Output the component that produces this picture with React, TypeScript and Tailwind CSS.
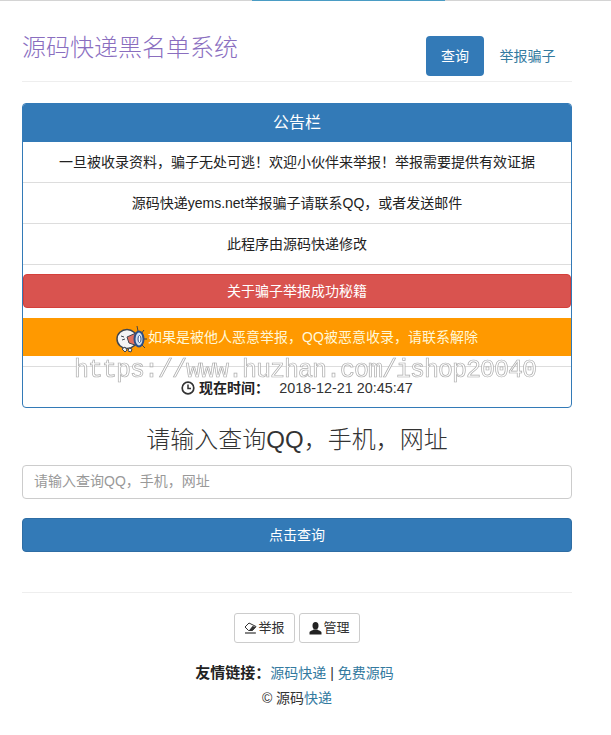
import React from "react";

const font = { fontFamily: '"Liberation Sans", "Noto Sans CJK SC", sans-serif' };

function Clock() {
  return (
    <svg width="14" height="14" viewBox="0 0 14 14" className="inline-block align-[-2px]">
      <circle cx="7" cy="7" r="5.8" fill="none" stroke="#333" strokeWidth="1.7" />
      <path d="M7 3.6V7.4H10" fill="none" stroke="#333" strokeWidth="1.5" />
    </svg>
  );
}

function Eraser() {
  return (
    <svg width="13" height="12" viewBox="0 0 13 12" className="inline-block align-[-1px]">
      <path d="M1 5 5 1 12 4.5 8.5 8.5H4.5Z" fill="#fff" stroke="#333" strokeWidth="1" />
      <path d="M5 8.5 8.5 4 12 5 8.5 8.5Z" fill="#333" />
      <path d="M1 11H12" stroke="#333" strokeWidth="1.2" />
    </svg>
  );
}

function User() {
  return (
    <svg width="13" height="13" viewBox="0 0 13 13" className="inline-block align-[-1px]">
      <ellipse cx="6.5" cy="3.8" rx="3" ry="3.7" fill="#222" />
      <path d="M.5 12.5V10.5C.5 9 3.5 8.5 4.8 7.5H8.2C9.5 8.5 12.5 9 12.5 10.5V12.5Z" fill="#222" />
    </svg>
  );
}

function Mascot() {
  return (
    <svg width="32" height="28" viewBox="0 0 32 28" className="mt-[4px] shrink-0">
      <path d="M21 1 22 6M28 5 25 9M31 14 27 14M29 23 26 20" stroke="#444" strokeWidth="1" fill="none" />
      <ellipse cx="11" cy="14" rx="10" ry="9.5" fill="#f4f4f4" stroke="#3f4650" strokeWidth="1.5" />
      <path d="M6 24l3-2 2 3-2 2ZM13 23l3 1-1 3-3-1Z" fill="#eee" stroke="#3f4650" strokeWidth="1" />
      <path d="M5 11l3 1M6 15l3-1" stroke="#3f4650" strokeWidth="1" />
      <path d="M11 12 20 8 22 21 13 18Z" fill="#e0705f" stroke="#3f4650" strokeWidth="1" />
      <ellipse cx="23" cy="14" rx="4.5" ry="7.5" fill="#cfe0f2" stroke="#2e4f86" strokeWidth="2" />
      <ellipse cx="23.5" cy="14" rx="1.5" ry="3.5" fill="#fff" stroke="#2e4f86" strokeWidth="1" />
    </svg>
  );
}

export default function App() {
  return (
    <div className="relative min-h-[735px] bg-white text-[14px] leading-[20px] text-[#333]" style={font}>
      <div className="flex h-px justify-start bg-[#d4d4d4] pl-[252px]">
        <div className="h-px w-[193px] bg-[#4a9cc4]" />
      </div>

      <div className="pl-[22px] pr-[39px]">
        <header className="flex h-[81px] items-start justify-between border-b border-[#eeeeee] pt-[35px]">
          <h3 className="mt-[-3px] text-[24px] font-light leading-[30px] text-[#8a6ebf]">源码快递黑名单系统</h3>
          <nav className="flex pr-[1px]">
            <a className="flex h-10 w-[58px] items-center justify-center rounded bg-[#337ab7] text-[#fff]">查询</a>
            <a className="flex h-10 w-[87px] items-center justify-center text-[#337a9f]">举报骗子</a>
          </nav>
        </header>

        <section className="mt-[21px] h-[305px] overflow-hidden rounded border border-[#337ab7] text-center">
          <div className="flex h-[38px] items-center justify-center bg-[#337ab7] text-[16px] text-white">公告栏</div>
          <div className="flex h-[41px] items-center justify-center border-b border-[#ddd] text-[#222]">
            一旦被收录资料，骗子无处可逃！欢迎小伙伴来举报！举报需要提供有效证据
          </div>
          <div className="flex h-[41px] items-center justify-center border-b border-[#ddd] text-[#222]">
            源码快递yems.net举报骗子请联系QQ，或者发送邮件
          </div>
          <div className="flex h-[41px] items-center justify-center border-b border-[#ddd] text-[#222]">
            此程序由源码快递修改
          </div>
          <div className="mt-[9px] flex h-[34px] items-center justify-center rounded border border-[#d43f3a] bg-[#d9534f] text-white">
            关于骗子举报成功秘籍
          </div>
          <div className="mt-[10px] flex h-[38px] items-center justify-center bg-[#ff9900] text-[#fff8d8]">
            <Mascot />
            <span>如果是被他人恶意举报，QQ被恶意收录，请联系解除</span>
          </div>
          <div className="mt-[10px] flex h-[41px] items-center justify-center gap-[10px] border-t border-[#ddd] pt-[1px]">
            <span className="font-bold text-[#222]">
              <Clock /> 现在时间：
            </span>
            <span className="text-[14.4px]">2018-12-21 20:45:47</span>
          </div>
        </section>

        <h2 className="mt-[16px] text-center text-[24px] font-light leading-[32px] text-[#333]">请输入查询QQ，手机，网址</h2>

        <div className="mt-[9px] flex h-[34px] items-center rounded border border-[#ccc] pb-[2px] pl-[11px] text-[#999]">
          请输入查询QQ，手机，网址
        </div>

        <button className="mt-[19px] flex h-[34px] w-full items-center justify-center rounded border border-[#2e6da4] bg-[#337ab7] text-white">
          点击查询
        </button>

        <hr className="mt-[40px] border-[#eeeeee]" />

        <div className="mt-[20px] flex justify-center gap-[4px] text-[13px]">
          <a className="flex h-[30px] w-[61px] items-center justify-center gap-[1px] rounded-[3px] border border-[#ccc] text-[#333]">
            <Eraser />
            举报
          </a>
          <a className="flex h-[30px] w-[61px] items-center justify-center gap-[1px] rounded-[3px] border border-[#ccc] text-[#333]">
            <User />
            管理
          </a>
        </div>

        <p className="mt-[20px] pr-[5px] text-center leading-[20px]">
          <b className="text-[15px] text-[#222]">友情链接：</b>
          <a className="text-[#337a9f]">源码快递</a> | <a className="text-[#337a9f]">免费源码</a>
        </p>
        <p className="mt-[5px] text-center leading-[20px]">
          © 源码<a className="text-[#337a9f]">快递</a>
        </p>
      </div>

      <div
        className="pointer-events-none absolute left-[74px] top-[356px] whitespace-nowrap text-[25px] leading-[30px] tracking-[-1px] text-white opacity-95 will-change-transform [-webkit-text-stroke:0.7px_#a8a8a8]"
        style={{ fontFamily: '"Liberation Mono", monospace' }}
      >
        https://www.huzhan.com/ishop20040
      </div>
    </div>
  );
}
